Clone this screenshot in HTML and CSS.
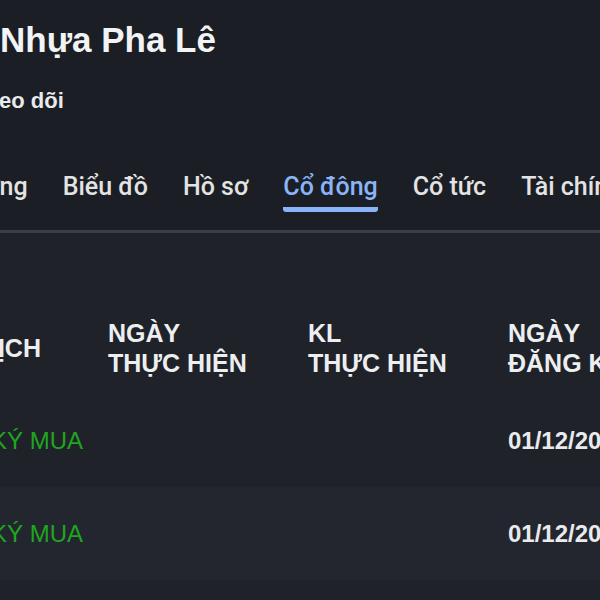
FILE: index.html
```html
<!DOCTYPE html>
<html lang="vi">
<head>
<meta charset="utf-8">
<title>Nhựa Pha Lê - Cổ đông</title>
<link rel="stylesheet" href="styles.css">
</head>
<body>
<header class="top">
  <h1 class="title"><span class="pre">Công ty Cổ phần</span>Nhựa Pha Lê</h1>
  <div class="follow"><span class="pre">Th</span>eo dõi</div>
  <nav class="tabs">
    <a class="tab">Thị trường</a>
    <a class="tab">Biểu đồ</a>
    <a class="tab">Hồ sơ</a>
    <a class="tab active">Cổ đông</a>
    <a class="tab">Cổ tức</a>
    <a class="tab">Tài chính</a>
  </nav>
</header>
<main class="content">
  <div class="table">
    <div class="row head">
      <div class="cell first">GIAO DỊCH</div>
      <div class="cell">NGÀY<br>THỰC HIỆN</div>
      <div class="cell">KL<br>THỰC HIỆN</div>
      <div class="cell">NGÀY<br>ĐĂNG KÝ</div>
    </div>
    <div class="row">
      <div class="cell first buy">ĐĂNG KÝ MUA</div>
      <div class="cell"></div>
      <div class="cell"></div>
      <div class="cell date">01/12/2023</div>
    </div>
    <div class="row alt">
      <div class="cell first buy">ĐĂNG KÝ MUA</div>
      <div class="cell"></div>
      <div class="cell"></div>
      <div class="cell date">01/12/2023</div>
    </div>
  </div>
</main>
</body>
</html>
```

FILE: styles.css
```css
html, body {
  margin: 0;
  padding: 0;
}
body {
  width: 600px;
  height: 600px;
  overflow: hidden;
  background: #1f2229;
  font-family: "Liberation Sans", Arial, sans-serif;
  color: #e8eaed;
}
.top {
  background: #1b1e24;
  padding-top: 20px;
  border-bottom: 3px solid #3a3e46;
  overflow: hidden;
}
.title {
  margin: 0;
  display: flex;
  white-space: nowrap;
  font-size: 35px;
  line-height: 40px;
  font-weight: bold;
  color: #f1f3f4;
}
.title .pre {
  box-sizing: border-box;
  flex: 0 0 300px;
  margin-left: -300px;
  padding-right: 10px;
  text-align: right;
  overflow: hidden;
}
.follow {
  margin-top: 28px;
  display: flex;
  white-space: nowrap;
  font-size: 22px;
  line-height: 26px;
  font-weight: bold;
  color: #e8eaed;
}
.follow .pre {
  flex: 0 0 60px;
  margin-left: -61px;
  text-align: right;
  overflow: hidden;
}
.tabs {
  margin-top: 58px;
  margin-left: -89px;
  display: flex;
  gap: 35px;
  white-space: nowrap;
  font-family: Roboto, "Liberation Sans", sans-serif;
  font-size: 25px;
  font-weight: 500;
  line-height: 30px;
  padding-bottom: 18px;
}
.tab {
  flex: none;
  color: #e3e3e3;
  padding-bottom: 5px;
  border-bottom: 5px solid transparent;
  border-radius: 0 0 3px 3px;
}
.tab.active {
  color: #8ab4f8;
  border-bottom-color: #8ab4f8;
}
.content {
  padding-top: 68px;
}
.table {
  margin-left: -122px;
}
.row {
  display: grid;
  grid-template-columns: 230px 200px 200px 200px;
  height: 92px;
  align-items: center;
  background: #1f2229;
}
.row.head {
  height: 94px;
}
.row.alt {
  background: #23262e;
  height: 93px;
}
.cell {
  white-space: nowrap;
  font-size: 24px;
}
.cell.first {
  padding-left: 37px;
}
.head .cell {
  font-size: 25px;
  line-height: 30px;
  font-weight: bold;
  color: #eceef0;
}
.head .cell.first {
  padding-left: 31px;
}
.buy {
  color: #1fa51f;
}
.date {
  font-weight: bold;
  color: #e8eaed;
}
```
